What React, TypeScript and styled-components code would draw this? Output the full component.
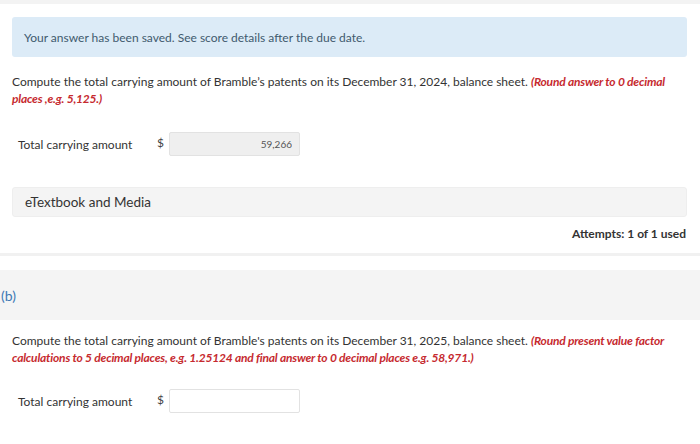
import React, { FC } from 'react';
import styled, { createGlobalStyle } from 'styled-components';

const GlobalStyle = createGlobalStyle`
  body {
    margin: 0;
    background: #fff;
    font-family: Lato, "Open Sans", sans-serif;
    color: #333;
  }
`;

interface AnswerRowProps {
  value?: string;
  gap?: number;
}

const AnswerRow: FC<AnswerRowProps> = ({ value, gap = 25 }) => (
  <Row gap={gap}>
    <Label>Total carrying amount</Label>
    <Dollar>$</Dollar>
    <Input readOnly={!!value} value={value ?? ''} filled={!!value} />
  </Row>
);

const App: FC = () => {
  return (
    <Page>
      <GlobalStyle />
      <TopBand />
      <PartA>
        <Notice>Your answer has been saved. See score details after the due date.</Notice>
        <Question>
          Compute the total carrying amount of Bramble’s patents on its December 31, 2024, balance sheet.{' '}
          <Hint>(Round answer to 0 decimal places ,e.g. 5,125.)</Hint>
        </Question>
        <AnswerRow value="59,266" />
        <MediaBox>eTextbook and Media</MediaBox>
        <Attempts>Attempts: 1 of 1 used</Attempts>
      </PartA>
      <Divider />
      <PartHeader>(b)</PartHeader>
      <PartB>
        <Question>
          Compute the total carrying amount of Bramble's patents on its December 31, 2025, balance sheet.{' '}
          <Hint>
            (Round present value factor calculations to 5 decimal places, e.g. 1.25124 and final answer to 0
            decimal places e.g. 58,971.)
          </Hint>
        </Question>
        <AnswerRow gap={23} />
      </PartB>
    </Page>
  );
};

const Page = styled.div`
  width: 700px;
  height: 444px;
  overflow: hidden;
  background: #fff;
`;

const TopBand = styled.div`
  height: 4px;
  background: #f3f3f3;
`;

const PartA = styled.section`
  padding: 13px 13px 0 12px;
  display: flex;
  flex-direction: column;
`;

const Notice = styled.div`
  height: 40px;
  display: flex;
  align-items: center;
  padding: 0 12px;
  background: #dcebf7;
  border-radius: 3px;
  color: #3f5a6e;
  font-size: 12px;
`;

const Question = styled.p`
  margin: 16px 0 0;
  font-size: 12px;
  line-height: 17px;
  color: #333;
`;

const Hint = styled.em`
  font-weight: 700;
  color: #c62a2f;
  letter-spacing: -0.2px;
`;

const Row = styled.div<{ gap: number }>`
  display: flex;
  align-items: center;
  margin-top: ${p => p.gap}px;
  padding-left: 6px;
`;

const Label = styled.span`
  width: 139px;
  font-size: 12px;
  color: #333;
`;

const Dollar = styled.span`
  width: 12px;
  font-size: 12px;
  color: #444;
  margin-top: -4px;
`;

const Input = styled.input<{ filled: boolean }>`
  width: 131px;
  height: 24px;
  box-sizing: border-box;
  border: 1px solid #e2e2e2;
  border-radius: 2px;
  background: ${p => (p.filled ? '#efefef' : '#fff')};
  text-align: right;
  padding: 0 7px;
  font-family: Lato, sans-serif;
  font-size: 10px;
  color: #555;
  outline: none;
`;

const MediaBox = styled.div`
  margin-top: 31px;
  height: 30px;
  display: flex;
  align-items: center;
  padding: 0 12px;
  background: #f4f4f4;
  border: 1px solid #eeeeee;
  box-sizing: border-box;
  border-radius: 3px;
  font-size: 13.5px;
  color: #333;
`;

const Attempts = styled.div`
  margin-top: 9px;
  align-self: flex-end;
  font-size: 12px;
  font-weight: 700;
  color: #333;
  margin-right: 1px;
`;

const Divider = styled.div`
  margin-top: 12px;
  height: 3px;
  background: #f1f1f1;
`;

const PartHeader = styled.div`
  margin-top: 14px;
  height: 50px;
  display: flex;
  align-items: center;
  padding-left: 1px;
  background: #f4f4f4;
  font-size: 14px;
  color: #3d79b4;
`;

const PartB = styled.section`
  padding: 0 13px 0 12px;

  & > p {
    margin-top: 12px;
  }
`;

export default App;
